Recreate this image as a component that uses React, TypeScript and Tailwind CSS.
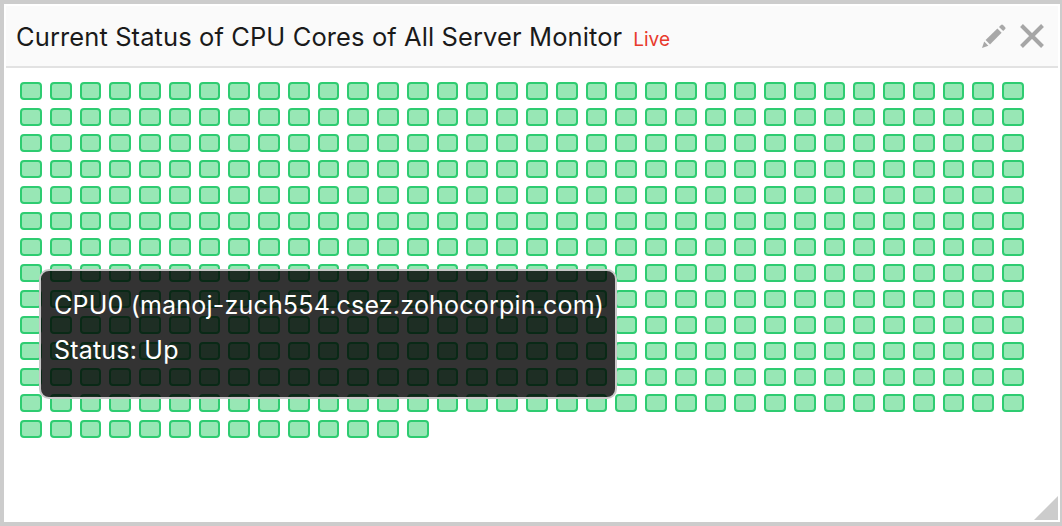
import React from 'react';

const FONT = 'font-["Inter","Noto_Sans",sans-serif]';

// 34 cores per row, 13 full rows plus 14 on the last one
const cores = Array.from({ length: 34 * 13 + 14 }, (_, i) => i);

const PencilIcon: React.FC = () => (
  <svg width="24" height="24" viewBox="0 0 24 24" className="block">
    <path d="M0 24 L2.2 17.6 L6.4 21.8 Z" fill="#a8a8a8" />
    <path d="M3.6 16 L15.4 4.6 L19.6 8.8 L8 20.4 Z" fill="#a8a8a8" />
    <path d="M17 3 L19 1 Q20 0 21 1 L23.2 3.2 Q24 4.2 23.2 5 L21.2 7 Z" fill="#a8a8a8" />
  </svg>
);

const CloseIcon: React.FC = () => (
  <svg width="24" height="24" viewBox="0 0 24 24" className="block">
    <path d="M1.5 1.5 L22.5 22.5 M22.5 1.5 L1.5 22.5" stroke="#a6a6a6" strokeWidth="4" fill="none" />
  </svg>
);

const App: React.FC = () => {
  return (
    <div className={`relative w-[1062px] h-[526px] overflow-hidden bg-white border-t-[4px] border-l-[4px] border-r-[2px] border-b-[4px] border-[#cccccc] p-[2px] ${FONT}`}>
      <div className="flex items-center justify-between h-[62px] pl-[10px] pr-[14px] bg-[#fafafa] border-b-2 border-[#e2e2e2]">
        <div className="flex items-baseline gap-[11px] pt-[3px]">
          <h2 className="text-[25.5px] font-normal tracking-[0.1px] text-[#1a1a1a]">Current Status of CPU Cores of All Server Monitor</h2>
          <span className="text-[19px] text-[#e8392b]">Live</span>
        </div>
        <div className="flex items-center gap-[14px]">
          <PencilIcon />
          <CloseIcon />
        </div>
      </div>

      <div className="grid grid-cols-[repeat(34,minmax(0,1fr))] gap-2 w-[1004px] ml-[14px] mt-[14px]">
        {cores.map((core) => (
          <div key={core} className="h-[18px] rounded-[4px] border-2 border-[#2ecc71] bg-[#98e7b5]" />
        ))}
      </div>

      <div className="absolute left-[35px] top-[265px] w-[578px] h-[130px] rounded-[10px] border-2 border-[#c8c8c8] bg-[rgba(0,0,0,0.8)] pl-[13px] pt-[19px] text-[25px] leading-[30px] tracking-[0.2px] text-white">
        <div>CPU0 (manoj-zuch554.csez.zohocorpin.com)</div>
        <div className="mt-[15px]">Status: Up</div>
      </div>

      <div className="absolute right-[2px] bottom-[2px] w-[24px] h-[24px] bg-[#cccccc] [clip-path:polygon(100%_0,100%_100%,0_100%)]" />
    </div>
  );
};

export default App;
